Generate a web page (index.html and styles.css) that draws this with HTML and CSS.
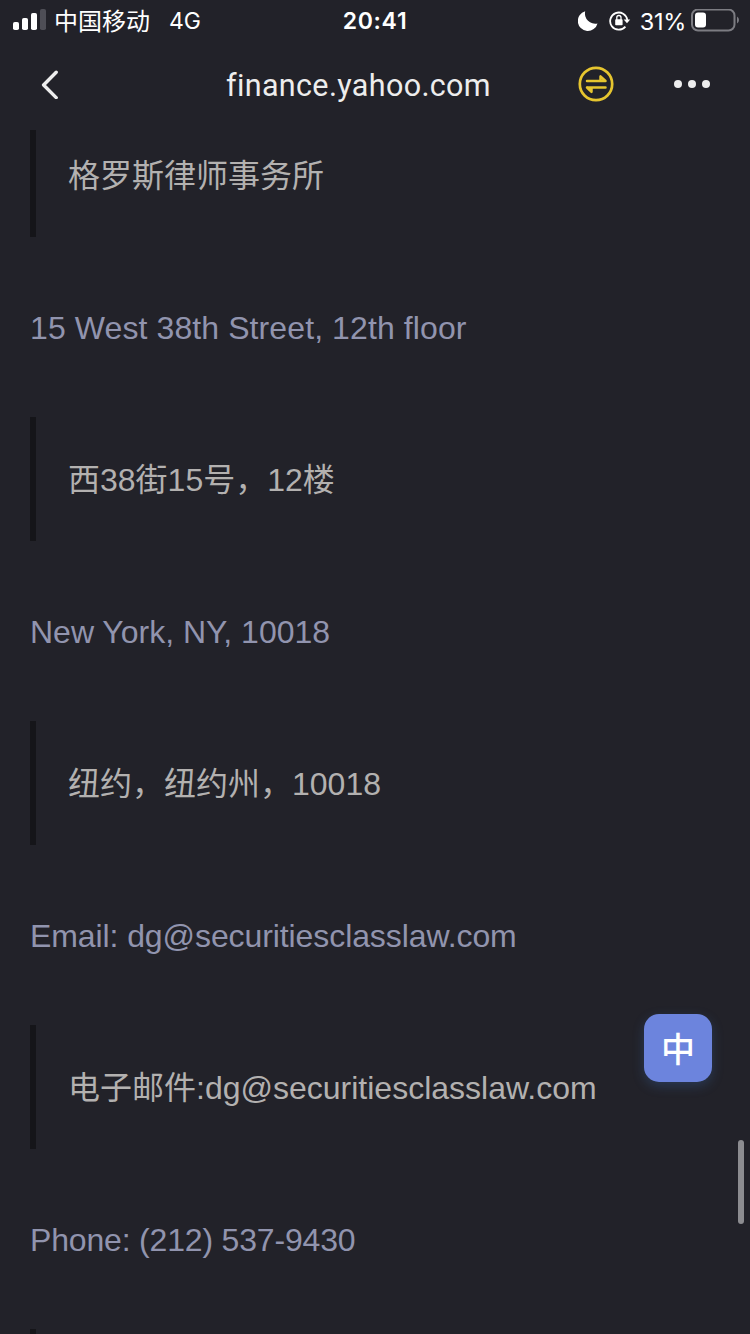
FILE: index.html
```
<!DOCTYPE html>
<html lang="zh-CN">
<head>
    <meta charset="UTF-8">
    <meta name="viewport" content="width=device-width, initial-scale=1.0">
    <title>finance.yahoo.com</title>
    <link rel="stylesheet" href="styles.css">
</head>
<body>
    <div class="screen">
        <!-- Status bar -->
        <div class="status-bar">
            <div class="status-left">
                <svg class="signal" width="34" height="22" viewBox="0 0 34 22">
                    <rect x="0" y="12" width="6" height="8" rx="1.8" fill="#fff"/>
                    <rect x="9" y="8" width="6" height="12" rx="1.8" fill="#fff"/>
                    <rect x="18" y="3" width="6" height="17" rx="1.8" fill="#fff"/>
                    <rect x="27" y="-1" width="6" height="21" rx="1.8" fill="#4e4e56"/>
                </svg>
                <span class="carrier">中国移动</span>
                <span class="network">4G</span>
            </div>
            <div class="clock">20:41</div>
            <div class="status-right">
                <svg class="moon" width="20" height="20" viewBox="0 0 20 20">
                    <path d="M7.2 0.3A10 10 0 1 0 19.5 12.4A10.2 10.2 0 0 1 7.2 0.3Z" fill="#fff"/>
                </svg>
                <svg class="lock" width="22" height="20" viewBox="0 0 22 20">
                    <path d="M16.4 15.6A8.6 8.6 0 1 1 18.3 9" fill="none" stroke="#fff" stroke-width="1.8"/>
                    <path d="M14.7 8.4H21.2L18 12.2Z" fill="#fff"/>
                    <rect x="6.2" y="8.2" width="7.4" height="6" rx="0.8" fill="#fff"/>
                    <path d="M7.8 9V6.6a2.1 2.1 0 0 1 4.2 0V9" fill="none" stroke="#fff" stroke-width="1.3"/>
                </svg>
                <span class="percent">31%</span>
                <svg class="battery" width="48" height="24" viewBox="0 0 48 24">
                    <rect x="1" y="0.5" width="42.5" height="21" rx="6" fill="none" stroke="#7c7c82" stroke-width="2"/>
                    <rect x="4" y="3.5" width="11" height="15" rx="3" fill="#fff"/>
                    <path d="M46 7.5Q48 8.5 48 11Q48 13.5 46 14.5Z" fill="#7c7c82"/>
                </svg>
            </div>
        </div>

        <!-- Title bar -->
        <header class="nav-bar">
            <svg class="back" width="18" height="30" viewBox="0 0 18 30">
                <path d="M16.2 3.2L3.6 16L16.2 28.6" fill="none" stroke="#ededed" stroke-width="3.4" stroke-linecap="round" stroke-linejoin="round"/>
            </svg>
            <h1>finance.yahoo.com</h1>
            <svg class="switch" width="36" height="36" viewBox="0 0 36 36" fill="none" stroke="#e6c52f">
                <circle cx="18" cy="18" r="16.2" stroke-width="2.7"/>
                <path d="M9 15H27.5L22.5 10.4V14.5M27.5 21.5H9M9 21.5L13.5 25.8V22" stroke-width="2.5" stroke-linecap="round" stroke-linejoin="round"/>
            </svg>
            <svg class="more" width="36" height="8" viewBox="0 0 36 8" fill="#ededed">
                <circle cx="4" cy="4" r="4"/>
                <circle cx="18" cy="4" r="4"/>
                <circle cx="32" cy="4" r="4"/>
            </svg>
        </header>

        <!-- Article with translations -->
        <main class="article">
            <blockquote>格罗斯律师事务所</blockquote>
            <p class="street">15 West 38th Street, 12th floor</p>
            <blockquote>西38街15号，12楼</blockquote>
            <p>New York, NY, 10018</p>
            <blockquote>纽约，纽约州，10018</blockquote>
            <p class="email">Email: dg@securitiesclasslaw.com</p>
            <blockquote>电子邮件:dg@securitiesclasslaw.com</blockquote>
            <p class="phone">Phone: (212) 537-9430</p>
            <blockquote></blockquote>
        </main>

        <button class="translate-btn">中</button>
        <div class="scrollbar"></div>
    </div>
</body>
</html>
```

FILE: styles.css
```
:root {
    --bg: #222229;
    --text: #b3b1b0;
    --original: #9194ae;
    --bar: #151519;
    --accent: #6c84dd;
}

* {
    box-sizing: border-box;
}

body {
    margin: 0;
    background: var(--bg);
    font-family: "Liberation Sans", "Noto Sans CJK SC", sans-serif;
}

.screen {
    position: relative;
    display: flex;
    flex-direction: column;
    width: 750px;
    height: 1334px;
    overflow: hidden;
}

/* Status bar */
.status-bar {
    display: grid;
    grid-template-columns: 1fr auto 1fr;
    align-items: center;
    height: 40px;
    padding: 1px 11px 0 13px;
    color: #fff;
    font-family: Inter, "Noto Sans CJK SC", sans-serif;
    font-size: 24px;
    line-height: 39px;
}

.status-left,
.status-right {
    display: flex;
    align-items: center;
}

.status-right {
    justify-content: flex-end;
}

.signal {
    overflow: visible;
}

.carrier {
    margin-left: 7px;
}

.network {
    margin-left: 19px;
    font-size: 23px;
}

.clock {
    margin: 1px 2px 0 0;
    font-weight: 600;
    font-size: 23px;
    letter-spacing: 0.7px;
}

.lock {
    margin-left: 11px;
}

.percent {
    margin-left: 9px;
    font-size: 23.5px;
    letter-spacing: -0.3px;
}

.battery {
    margin-left: 5px;
}

/* Title bar */
.nav-bar {
    display: flex;
    align-items: center;
    flex: none;
    height: 90px;
    padding: 0 40px 2px;
}

h1 {
    margin: 2px 0 0 168px;
    color: #ededed;
    font-family: Roboto, sans-serif;
    font-size: 30.5px;
    font-weight: 400;
    letter-spacing: 0.35px;
    font-variant-ligatures: none;
}

.switch {
    margin-left: auto;
}

.more {
    margin-left: 60px;
}

/* Article */
.article {
    flex: 1;
    padding: 0 30px;
    overflow: hidden;
    font-size: 32px;
    line-height: 48px;
}

blockquote {
    height: 124px;
    margin: 0;
    padding: 39px 32px 37px;
    border-left: 6px solid var(--bar);
    color: var(--text);
}

blockquote:first-child {
    margin-top: -17px;
}

p {
    margin: 0;
    padding: 67px 0 65px;
    color: var(--original);
}

.street {
    letter-spacing: 0.1px;
}

.email {
    letter-spacing: -0.09px;
}

.phone {
    letter-spacing: -0.18px;
}

/* Floating controls */
.translate-btn {
    position: absolute;
    top: 1014px;
    right: 38px;
    width: 68px;
    height: 68px;
    padding: 0;
    border: 0;
    border-radius: 15px;
    background: var(--accent);
    box-shadow: 0 4px 12px rgba(60, 110, 180, 0.3);
    color: #fff;
    font-family: "Noto Sans CJK SC", sans-serif;
    font-size: 34px;
    font-weight: 500;
    line-height: 66px;
}

.scrollbar {
    position: absolute;
    top: 1140px;
    right: 6px;
    width: 6px;
    height: 84px;
    border-radius: 3px;
    background: #8c8c90;
}
```
